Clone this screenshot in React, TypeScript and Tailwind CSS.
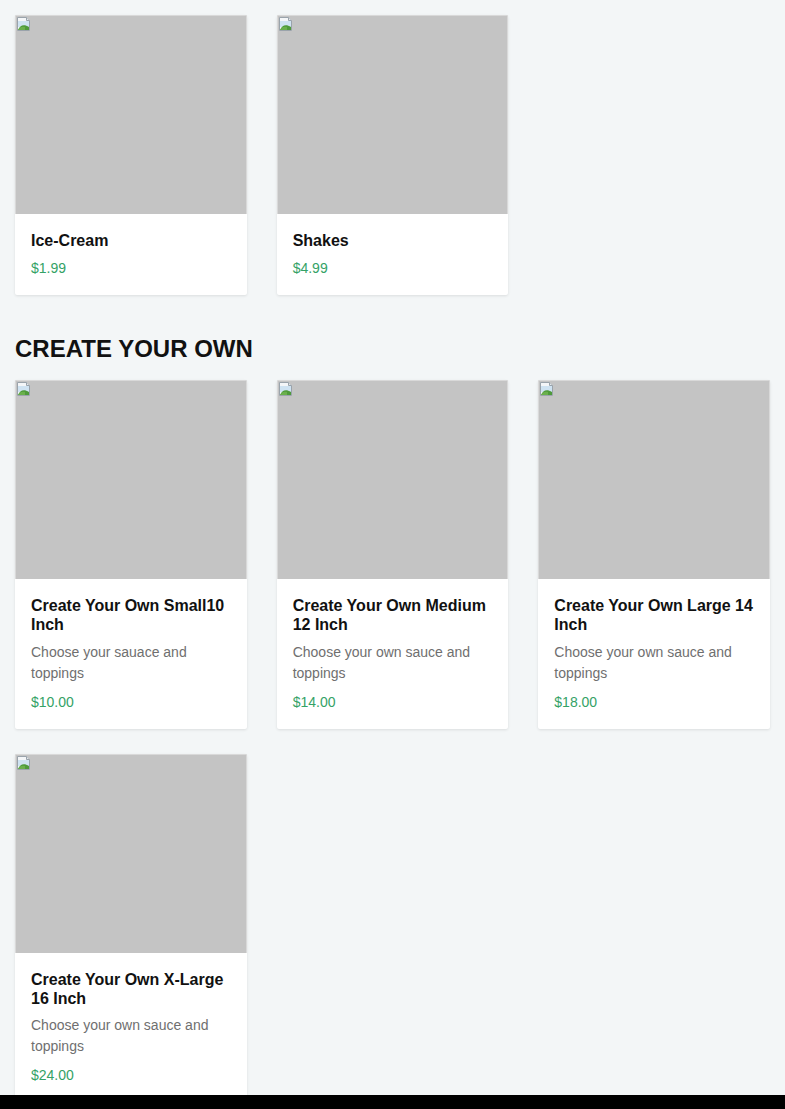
import React from "react";

type Item = { title: string; desc?: string; price: string };

const BrokenIcon = () => (
  <svg width="16" height="16" viewBox="0 0 16 16" className="absolute left-0 top-0">
    <path d="M1.5 1.5h9l3 3v10h-12z" fill="#f4f6f8" stroke="#9aa3ab" strokeWidth="1" />
    <path d="M10.5 1.5v3h3" fill="#e3e7ea" stroke="#9aa3ab" strokeWidth="1" />
    <rect x="2" y="5" width="11" height="6" fill="#cfe3f2" />
    <path d="M2 14 C4 9 8 8 13 11 V14 Z" fill="#4e9a3a" />
    <path d="M2 14 C3.5 11 6 10 9 11 L9 14 Z" fill="#6ab04c" />
  </svg>
);

const Card = ({ item }: { item: Item }) => (
  <div className="flex flex-col bg-white rounded-[2px] shadow-[0_1px_3px_rgba(0,0,0,0.10)] overflow-hidden">
    <div className="relative h-[199px] bg-[#c4c4c4] border border-b-0 border-[#d9d9d9]">
      <BrokenIcon />
    </div>
    <div className="px-4 pt-[17px] pb-4 flex flex-col">
      <div className="text-[16px] leading-[1.2] font-bold text-[#111111]">{item.title}</div>
      {item.desc && (
        <div className="mt-[7px] text-[14px] leading-[21px] text-[#6f6f6f]">{item.desc}</div>
      )}
      <div className="mt-2 text-[14px] leading-[21px] text-[#34a266]">{item.price}</div>
    </div>
  </div>
);

export default function App() {
  const desserts: Item[] = [
    { title: "Ice-Cream", price: "$1.99" },
    { title: "Shakes", price: "$4.99" },
  ];
  const own: Item[] = [
    { title: "Create Your Own Small10 Inch", desc: "Choose your sauace and toppings", price: "$10.00" },
    { title: "Create Your Own Medium 12 Inch", desc: "Choose your own sauce and toppings", price: "$14.00" },
    { title: "Create Your Own Large 14 Inch", desc: "Choose your own sauce and toppings", price: "$18.00" },
    { title: "Create Your Own X-Large 16 Inch", desc: "Choose your own sauce and toppings", price: "$24.00" },
  ];
  return (
    <div
      className="min-h-[1109px] bg-[#f3f6f7] px-[15px] pt-[15px] pb-10"
      style={{ fontFamily: '"Liberation Sans", Arial, sans-serif' }}
    >
      <div className="grid grid-cols-3 gap-x-[30px] gap-y-[25px]">
        {desserts.map((d) => (
          <Card key={d.title} item={d} />
        ))}
      </div>
      <h2 className="mt-[38px] mb-[15px] text-[24px] leading-[32px] font-bold text-[#111111]">CREATE YOUR OWN</h2>
      <div className="grid grid-cols-3 gap-x-[30px] gap-y-[25px]">
        {own.map((d) => (
          <Card key={d.title} item={d} />
        ))}
      </div>
      <div className="fixed bottom-0 left-0 right-0 h-[14px] bg-black" />
    </div>
  );
}
